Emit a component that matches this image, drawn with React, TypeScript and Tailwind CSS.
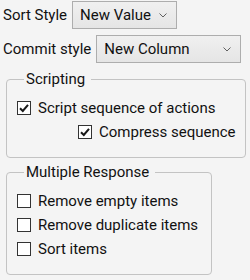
import React from "react";

const font = { fontFamily: 'Roboto, "Noto Sans", Arial, sans-serif' };

function Chevron() {
  return (
    <svg width="8" height="5" viewBox="0 0 8 5" className="shrink-0">
      <path d="M0.5 0.5 L4 4 L7.5 0.5" fill="none" stroke="#606060" strokeWidth="1" />
    </svg>
  );
}

function Dropdown({ value, width }: { value: string; width: string }) {
  return (
    <div
      className={`${width} h-[28px] flex items-center justify-between pl-[7px] pr-[9px] border border-[#adadad] bg-gradient-to-b from-[#f0f0f0] to-[#e5e5e5]`}
    >
      <span>{value}</span>
      <Chevron />
    </div>
  );
}

function Check({ checked }: { checked: boolean }) {
  return (
    <div className="w-[14px] h-[14px] border border-[#333333] bg-white flex items-center justify-center shrink-0">
      {checked && (
        <svg width="12" height="12" viewBox="0 0 12 12">
          <path d="M2 6.2 L4.8 9 L10 2.8" fill="none" stroke="#1a1a1a" strokeWidth="2" />
        </svg>
      )}
    </div>
  );
}

function Row({ label, checked, indent }: { label: string; checked: boolean; indent?: string }) {
  return (
    <div className={`flex items-center gap-[7px] h-[24px] ${indent ?? ""}`}>
      <Check checked={checked} />
      <span>{label}</span>
    </div>
  );
}

export default function App() {
  return (
    <div
      style={font}
      className="w-[250px] h-[280px] bg-[#f4f4f4] text-[#111111] text-[15px] leading-[20px] pl-[3px] pt-[1px]"
    >
      <div className="flex items-center gap-[5px]">
        <span>Sort Style</span>
        <Dropdown value="New Value" width="w-[105px]" />
      </div>
      <div className="flex items-center gap-[5px] mt-[6px]">
        <span>Commit style</span>
        <Dropdown value="New Column" width="w-[145px]" />
      </div>
      <fieldset className="ml-[3px] mt-[6px] w-[240px] border border-[#c3c3c3] rounded-[4px] pl-[10px] pb-[13px] pt-[7px]">
        <legend className="ml-[7px] pl-[2px] pr-[6px]">Scripting</legend>
        <Row label="Script sequence of actions" checked />
        <Row label="Compress sequence" checked indent="ml-[61px]" />
      </fieldset>
      <fieldset className="ml-[3px] mt-[4px] w-[206px] border border-[#c3c3c3] rounded-[4px] pl-[10px] pb-[13px] pt-[7px]">
        <legend className="ml-[7px] pl-[2px] pr-[6px]">Multiple Response</legend>
        <Row label="Remove empty items" checked={false} />
        <Row label="Remove duplicate items" checked={false} />
        <Row label="Sort items" checked={false} />
      </fieldset>
    </div>
  );
}
